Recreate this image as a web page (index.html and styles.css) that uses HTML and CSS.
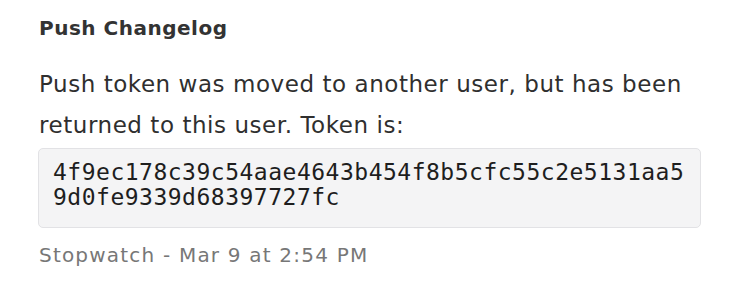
FILE: index.html
```html
<!DOCTYPE html>
<html>
<head>
<meta charset="utf-8">
<link rel="stylesheet" href="styles.css">
</head>
<body>
<div class="entry">
  <h2 class="title">Push Changelog</h2>
  <p class="message">Push token was moved to another user, but has been returned to this user. Token is:</p>
  <pre class="token">4f9ec178c39c54aae4643b454f8b5cfc55c2e5131aa59d0fe9339d68397727fc</pre>
  <div class="meta">Stopwatch - Mar 9 at 2:54 PM</div>
</div>
</body>
</html>
```
FILE: styles.css
```css
html, body {
  margin: 0;
  padding: 0;
  background: #ffffff;
}
.entry {
  padding: 14px 43px 0 38px;
  font-family: "DejaVu Sans", sans-serif;
}
.title {
  margin: 0 0 0 1px;
  font-size: 20px;
  line-height: 28px;
  font-weight: 600;
  letter-spacing: 0.5px;
  color: #333333;
}
.message {
  margin: 22px 0 2px 1px;
  font-size: 23px;
  line-height: 41px;
  letter-spacing: 0.55px;
  color: #2f2f2f;
}
.token {
  margin: 0;
  padding: 11px 12px 17px 14px;
  background: #f4f4f5;
  border: 1px solid #e2e2e5;
  border-radius: 5px;
  font-family: "DejaVu Sans Mono", monospace;
  font-size: 23px;
  line-height: 25px;
  letter-spacing: 0.5px;
  color: #1e1e1e;
  white-space: pre-wrap;
  word-break: break-all;
}
.meta {
  margin: 15px 0 0 1px;
  font-size: 20px;
  line-height: 24px;
  letter-spacing: 1.2px;
  color: #777777;
}
```
